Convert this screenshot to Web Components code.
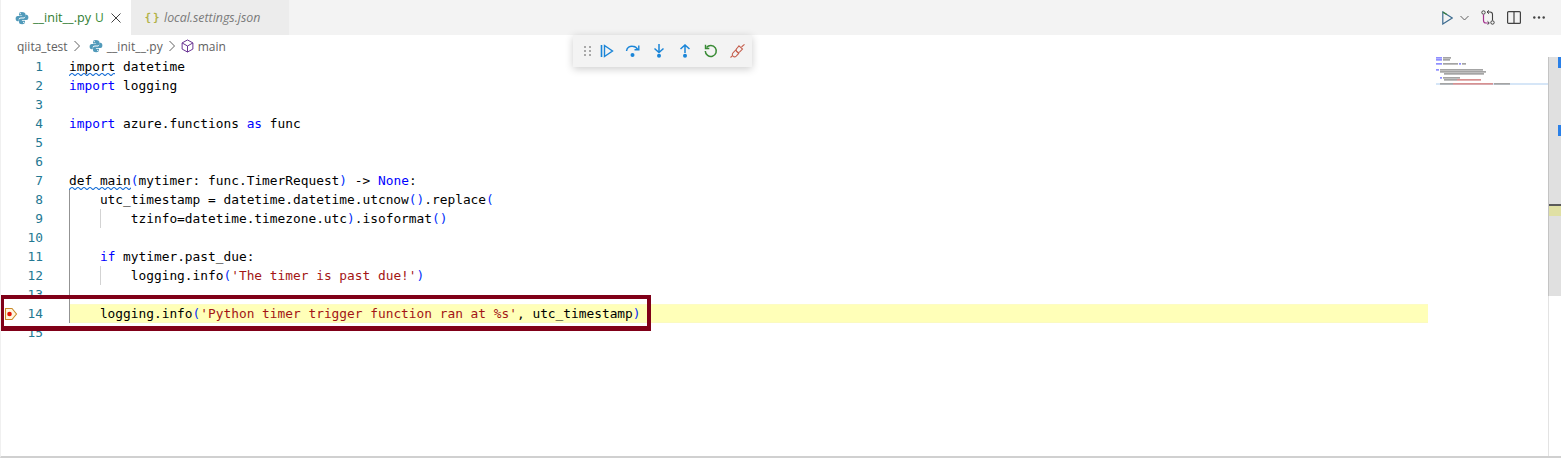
<!DOCTYPE html>
<html lang="en"><head><meta charset="utf-8"><title>VS Code debug</title>
<style>
html,body{margin:0;padding:0;background:#fff;}
body{width:1561px;height:458px;overflow:hidden;font-family:"Open Sans","Liberation Sans",sans-serif;}
</style></head><body>
<vs-window>
  <vs-tabbar slot="tabs">
    <vs-tab active icon="py" name="__init__.py" decoration="U"></vs-tab>
    <vs-tab icon="json" name="local.settings.json" italic></vs-tab>
    <vs-actions slot="actions"></vs-actions>
  </vs-tabbar>
  <vs-breadcrumbs slot="crumbs"></vs-breadcrumbs>
  <vs-editor slot="editor">
    <vs-line n="1"><vs-squiggle><span class="k">import</span></vs-squiggle> datetime</vs-line>
    <vs-line n="2"><span class="k">import</span> logging</vs-line>
    <vs-line n="3"></vs-line>
    <vs-line n="4"><span class="k">import</span> azure.functions <span class="k">as</span> func</vs-line>
    <vs-line n="5"></vs-line>
    <vs-line n="6"></vs-line>
    <vs-line n="7"><vs-squiggle><span class="k">def</span> main</vs-squiggle><span class="b">(</span>mytimer: func.TimerRequest<span class="b">)</span> -&gt; <span class="k">None</span>:</vs-line>
    <vs-line n="8" guides="a">    utc_timestamp = datetime.datetime.utcnow<span class="b">()</span>.replace<span class="b">(</span></vs-line>
    <vs-line n="9" guides="ab">        tzinfo=datetime.timezone.utc<span class="b">)</span>.isoformat<span class="b">()</span></vs-line>
    <vs-line n="10" guides="a"></vs-line>
    <vs-line n="11" guides="a">    <span class="k">if</span> mytimer.past_due:</vs-line>
    <vs-line n="12" guides="ab">        logging.info<span class="b">(</span><span class="s">'The timer is past due!'</span><span class="b">)</span></vs-line>
    <vs-line n="13" guides="a"></vs-line>
    <vs-line n="14" guides="a" current>    logging.info<span class="b">(</span><span class="s">'Python timer trigger function ran at %s'</span>, utc_timestamp<span class="b">)</span></vs-line>
    <vs-line n="15"></vs-line>
    <vs-minimap slot="minimap"></vs-minimap>
    <vs-scrollbar slot="scrollbar"></vs-scrollbar>
  </vs-editor>
  <vs-debugbar slot="overlay"></vs-debugbar>
  <vs-callout slot="overlay"></vs-callout>
</vs-window>
<script>
const PY='<svg width="14" height="14" viewBox="0 0 16 16" style="display:block"><path fill="#519aba" d="M7.9 1C5.3 1 4.6 2 4.6 3.2V5h3.5v.6H3C1.7 5.6.7 6.6.7 8.5c0 2 .9 3.1 2.2 3.1h1.4V9.8c0-1.3 1.1-2.4 2.4-2.4h3.3c1 0 1.9-.9 1.9-1.9V3.200C11.500 1.900 10.100 1 7.900 1zM6 2.200a.7.7 0 1 1 0 1.400.7.7 0 0 1 0-1.400z"/><path fill="#519aba" d="M8.100 15c2.600 0 3.300-1 3.300-2.200V11H7.900v-.6H13c1.300 0 2.300-1 2.300-2.900 0-2-.9-3.100-2.200-3.100h-1.400v1.800c0 1.300-1.100 2.400-2.400 2.400H6.500c-1 0-1.900.9-1.900 1.900v2.300C4.500 14.100 5.900 15 8.100 15zm1.900-1.200a.7.7 0 1 1 0-1.400.7.7 0 0 1 0 1.400z"/></svg>';
const CHEV='<svg width="8" height="12" viewBox="0 0 8 12" style="display:block"><path d="M1.500 1l5 5-5 5" fill="none" stroke="#616161" stroke-width="1"/></svg>';
const WAVE="url(\"data:image/svg+xml,%3Csvg xmlns='http://www.w3.org/2000/svg' width='6' height='3' viewBox='0 0 6 3'%3E%3Cpath d='M0 2.500C1 2.500 1.500 .5 3 .5S5 2.500 6 2.500' fill='none' stroke='%231a70d8' stroke-width='1.100'/%3E%3C/svg%3E\")";
function def(name,css,html,init){
  customElements.define(name,class extends HTMLElement{
    connectedCallback(){
      if(this.shadowRoot)return;
      const r=this.attachShadow({mode:'open'});
      r.innerHTML='<style>'+css+'</style>'+(typeof html==='function'?html(this):html);
      if(init)init(this,r);
    }
  });
}
def('vs-window',
 `:host{display:flex;flex-direction:column;position:relative;width:1561px;height:458px;box-sizing:border-box;border-left:1px solid #f0f0f0;border-bottom:2px solid #d0d0d0;overflow:hidden;background:#fff;}`,
 `<slot name="tabs"></slot><slot name="crumbs"></slot><slot name="editor"></slot><slot name="overlay"></slot>`);
def('vs-tabbar',
 `:host{display:flex;height:35px;background:#f3f3f3;flex:none;margin-left:-1px}
  ::slotted(vs-actions){margin-left:auto}`,
 `<slot></slot><slot name="actions"></slot>`);
def('vs-tab',
 `:host{display:flex;align-items:center;height:35px;box-sizing:border-box;font:12.6px "Open Sans",sans-serif;color:#616161;background:#ececec;width:158px;padding-left:14px;flex:none}
  :host([active]){background:#fff;width:131px;color:#2f7d32;padding-left:15px}
  .ic{width:14px;height:14px;flex:none;display:flex;align-items:center;justify-content:center}
  .js{font:11px "DejaVu Sans Mono",monospace;color:#b0b040;letter-spacing:2px;margin-left:2px;-webkit-text-stroke:.3px #b0b040}
  .n{margin-left:4px}
  :host([italic]) .n{font-style:italic;font-size:12.4px;margin-left:5px;color:#7a7a7a}
  .d{margin-left:4px;color:#388a34;font-size:12px}
  .x{margin-left:7px;display:block}`,
 h=>{
  const act=h.hasAttribute('active');
  return `<span class="ic">${h.getAttribute('icon')==='py'?PY:'<span class="js">{}</span>'}</span><span class="n">${h.getAttribute('name')}</span>`+
   (h.getAttribute('decoration')?`<span class="d">${h.getAttribute('decoration')}</span>`:'')+
   (act?'<svg class="x" width="10" height="10" viewBox="0 0 10 10"><path d="M.5.500l9 9M9.500.500l-9 9" stroke="#424242" stroke-width="1"/></svg>':'');
 });
def('vs-actions',
 `:host{display:flex;align-items:center;height:35px;padding-right:16px}
  svg{display:block;flex:none}`,
 `<svg width="11" height="14" viewBox="0 0 11 14" style="margin-right:7px"><path d="M.8 1l9.500 6-9.500 6z" fill="none" stroke="#3b6a8f" stroke-width="1.200"/><path d="M.8 1l4 2.500" stroke="#38803a" stroke-width="1.200"/></svg>
  <svg width="9" height="6" viewBox="0 0 9 6" style="margin-right:12px"><path d="M.5 1l4 4 4-4" fill="none" stroke="#616161"/></svg>
  <svg width="14" height="15" viewBox="0 0 14 15" style="margin-right:12px"><circle cx="2.500" cy="2.500" r="1.700" fill="none" stroke="#424242"/><circle cx="11.500" cy="12.500" r="1.700" fill="none" stroke="#424242"/><path d="M2.500 4.500v6c0 2 1 2.500 2.500 2.500h3" fill="none" stroke="#a3348e" stroke-width="1.200"/><path d="M11.500 10.500v-6c0-2-1-2.500-2.500-2.500H6.500" fill="none" stroke="#424242" stroke-width="1.100"/><path d="M8 .300L6 2l2 1.700M6.500 11.300L8.300 13l-1.800 1.700" fill="none" stroke="#424242"/></svg>
  <svg width="14" height="13" viewBox="0 0 14 13" style="margin-right:12px"><rect x=".6" y=".6" width="12.800" height="11.800" rx="1" fill="none" stroke="#424242" stroke-width="1.200"/><path d="M7 .6v11.800" stroke="#424242" stroke-width="1.200"/></svg>
  <svg width="12" height="3" viewBox="0 0 12 3"><circle cx="1.300" cy="1.500" r="1.200" fill="#424242"/><circle cx="6" cy="1.500" r="1.200" fill="#424242"/><circle cx="10.700" cy="1.500" r="1.200" fill="#424242"/></svg>`);
def('vs-breadcrumbs',
 `:host{display:flex;align-items:center;height:22px;flex:none;padding-left:16px;font:12px "Open Sans",sans-serif;color:#616161}
  .c{margin:0 5px 0 5px;display:block}
  .g{display:flex;align-items:center}
  .f{letter-spacing:.08px}
  svg{flex:none}`,
 `<span>qiita_test</span><span class="c">${CHEV}</span><span class="g" style="margin:0 4px 0 3px">${PY}</span><span class="f">__init__.py</span><span class="c">${CHEV}</span>
  <svg width="13" height="14" viewBox="0 0 14 15" style="margin:0 4px 0 0"><path d="M7 1l5.800 3.200v6.600L7 14l-5.800-3.200V4.200z M1.200 4.200L7 7.500l5.800-3.300M7 7.500V14" fill="none" stroke="#652d90" stroke-width="1.050"/></svg><span>main</span>`);
def('vs-editor',
 `:host{display:block;position:relative;flex:1;min-height:0}
  .lines{display:block}
  .side{position:absolute;top:0;bottom:0;left:1427px;width:120px}
  .bar{position:absolute;top:0;bottom:0;left:1547px;width:13px}`,
 `<div class="lines"><slot></slot></div><div class="side"><slot name="minimap"></slot></div><div class="bar"><slot name="scrollbar"></slot></div>`);
def('vs-line',
 `:host{display:flex;height:19px;font:12.83px/19px "DejaVu Sans Mono",monospace;color:#000;white-space:pre}
  .num{width:42px;flex:none;text-align:right;color:#237893;position:relative}
  .gut{width:26px;flex:none}
  .code{flex:none;width:1359px;position:relative;box-sizing:border-box}
  :host([current]) .code{background:#ffffb8;box-shadow:inset 0 1px 0 #fdfcc4,inset 0 -1px 0 #fbfac0;}
  .g{position:absolute;top:0;bottom:0;width:1px}
  .ga{left:0;background:#939393}
  .gb{left:31px;background:#d3d3d3}
  ::slotted(.k){color:#0000ff}
  ::slotted(.s){color:#a31515}
  ::slotted(.b){color:#0431fa}
  .bp{position:absolute;left:3px;top:3px;display:block}`,
 h=>{
  const g=h.getAttribute('guides')||'';
  const cur=h.hasAttribute('current');
  return `<div class="num">${h.getAttribute('n')}${cur?'<svg class="bp" width="14" height="14" viewBox="0 0 14 14"><path d="M1.500 1.500h6.500l4.500 5.500-4.500 5.500H1.500z" fill="#fff6e0" stroke="#c98a2a" stroke-width="1.100"/><circle cx="5.500" cy="7" r="2.300" fill="#e51400"/></svg>':''}</div><div class="gut"></div><div class="code">${g.includes('a')?'<span class="g ga"></span>':''}${g.includes('b')?'<span class="g gb"></span>':''}<slot></slot></div>`;
 });
def('vs-squiggle',
 `:host{display:inline-block;height:19px;vertical-align:top;background:${WAVE} 0 100% repeat-x}`,
 `<slot></slot>`);
def('vs-minimap',
 `:host{display:block;position:absolute;inset:0}
  svg{display:block}`,
 ()=>{
  const K='#8f8fff',T='#a4a4a4',S='#d79090';
  const L={
   1:[[8,6,K],[15,8,T]],2:[[8,6,K],[15,7,T]],4:[[8,6,K],[15,15,T],[31,2,K],[34,4,T]],
   7:[[8,3,K],[12,43,T]],8:[[12,46,T]],9:[[16,40,T]],11:[[12,2,K],[15,17,T]],
   12:[[16,13,T],[29,24,S]],14:[[12,13,T],[25,40,S],[66,16,T]]};
  let s='<rect x="8" y="26" width="112" height="2" fill="#d6e6f7"/>';
  for(const n in L)for(const [x,w,c] of L[n])s+=`<rect x="${x}" y="${(n-1)*2}" width="${w}" height="1.700" fill="${c}"/>`;
  return `<svg width="120" height="60" viewBox="0 0 120 60">${s}</svg>`;
 });
def('vs-scrollbar',
 `:host{display:block;position:absolute;inset:0;border-left:1px solid #e3e3e3}
  .t{position:relative;height:239px;background:#e0e0e0;margin-left:-1px;border-left:1px solid #c4c4c4;}
  .m{position:absolute}`,
 `<div class="t">
   <div class="m" style="right:0;top:0;width:3px;height:11px;background:#2a80e8"></div>
   <div class="m" style="right:0;top:68px;width:3px;height:11px;background:#2a80e8"></div>
   <div class="m" style="left:0;right:0;top:147px;height:2px;background:#5a5a5a"></div>
   <div class="m" style="left:0;right:0;top:149px;height:10px;background:#e0e0a4"></div>
  </div>`);
def('vs-debugbar',
 `:host{position:absolute;left:572px;top:35px;width:179px;height:32px;background:#f3f3f3;box-shadow:0 2px 8px rgba(0,0,0,.2);display:flex;align-items:center;padding-left:11px;box-sizing:border-box}
  svg{display:block;flex:none}
  .i{width:26px;display:flex;justify-content:center}
  .grip{width:8px;margin-right:2px}`,
 `<span class="grip"><svg width="8" height="10" viewBox="0 0 8 10"><g fill="#a8a8a8"><rect width="2" height="2"/><rect x="5" width="2" height="2"/><rect y="4" width="2" height="2"/><rect x="5" y="4" width="2" height="2"/><rect y="8" width="2" height="2"/><rect x="5" y="8" width="2" height="2"/></g></svg></span>
  <span class="i"><svg width="14" height="14" viewBox="0 0 14 14"><path d="M1.500 1v12" stroke="#1a85d8" stroke-width="1.600"/><path d="M4.500 1.500l8 5.500-8 5.500z" fill="none" stroke="#1a85d8" stroke-width="1.400"/></svg></span>
  <span class="i"><svg width="16" height="14" viewBox="0 0 16 14"><path d="M1.500 7C2 3.500 5 2 7.500 2.200c2 .1 4 1 5.300 3.300" fill="none" stroke="#1a85d8" stroke-width="1.500"/><path d="M13.800 1.500v4.300H9.500" fill="none" stroke="#1a85d8" stroke-width="1.400"/><circle cx="7.500" cy="11" r="2" fill="#1a85d8"/></svg></span>
  <span class="i"><svg width="12" height="14" viewBox="0 0 12 14"><path d="M6 0v8M1.500 4.500L6 8.500l4.500-4" fill="none" stroke="#1a85d8" stroke-width="1.500"/><circle cx="6" cy="11.800" r="2" fill="#1a85d8"/></svg></span>
  <span class="i"><svg width="12" height="14" viewBox="0 0 12 14"><path d="M6 9V1M1.500 5L6 1l4.500 4" fill="none" stroke="#1a85d8" stroke-width="1.500"/><circle cx="6" cy="11.800" r="2" fill="#1a85d8"/></svg></span>
  <span class="i"><svg width="14" height="14" viewBox="0 0 14 14"><path d="M2.500 3.500A5.500 5.500 0 1 1 1.300 7" fill="none" stroke="#388a34" stroke-width="1.500"/><path d="M1.500.8v3.700h3.800" fill="none" stroke="#388a34" stroke-width="1.400"/></svg></span>
  <span class="i"><svg width="15" height="14" viewBox="0 0 15 14"><g fill="none" stroke="#c5604f" stroke-width="1.100"><path d="M9 1.800l3.500 3.200-2.500 2.700c-1 .9-2.300.9-3.200 0s-.9-2.300 0-3.200z"/><path d="M5.500 6.200l3.200 3.200-2.500 2.700c-.9.9-2.300.9-3.200 0s-.9-2.300 0-3.200z"/><path d="M11.500 3l3-2.600M.5 13.500l2-1.800"/></g></svg></span>`);
def('vs-callout',
 `:host{position:absolute;left:-1px;top:295px;width:651px;height:36px;box-sizing:border-box;border:4px solid #800018;border-bottom-width:5px;pointer-events:none}`,
 ``);
</script>
</body></html>
